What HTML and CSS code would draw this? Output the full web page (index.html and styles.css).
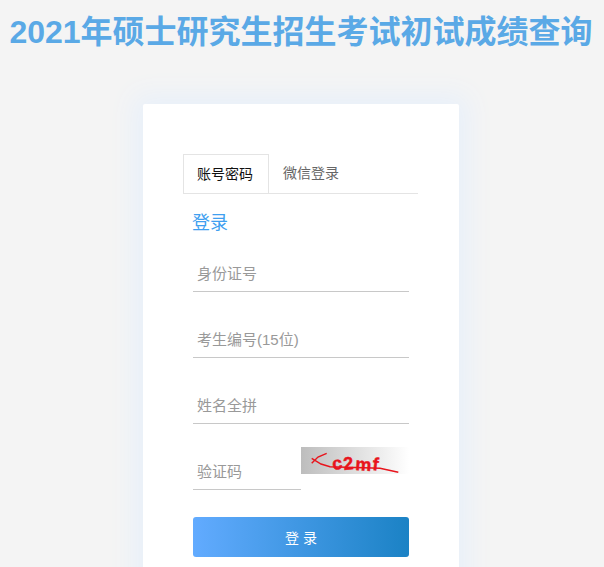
FILE: index.html
```html
<!DOCTYPE html>
<html lang="zh-CN">
<head>
<meta charset="utf-8">
<title>2021年硕士研究生招生考试初试成绩查询</title>
<link rel="stylesheet" href="styles.css">
</head>
<body>
<h1 class="page-title">2021年硕士研究生招生考试初试成绩查询</h1>
<main class="card">
  <div class="tabs">
    <div class="tab tab-active">账号密码</div>
    <div class="tab">微信登录</div>
  </div>
  <form class="form">
    <h2 class="form-title">登录</h2>
    <div class="field"><input class="input" type="text" placeholder="身份证号"></div>
    <div class="field"><input class="input" type="text" placeholder="考生编号(15位)"></div>
    <div class="field"><input class="input" type="text" placeholder="姓名全拼"></div>
    <div class="field field-captcha">
      <input class="input input-short" type="text" placeholder="验证码">
      <svg class="captcha" width="108" height="27" viewBox="0 0 108 27" role="img" aria-label="验证码图片">
        <defs>
          <linearGradient id="captcha-bg" x1="0" x2="1" y1="0" y2="0">
            <stop offset="0" stop-color="#bdbdbd"/>
            <stop offset="1" stop-color="#ffffff"/>
          </linearGradient>
        </defs>
        <rect width="108" height="27" fill="url(#captcha-bg)"/>
        <text class="captcha-text" x="32" y="23" rotate="-8 -6 4 6">c2mf</text>
        <path class="captcha-line" d="M10.7 16.3 L17 10 L25.7 6.3 M10.7 11.3 L20 17 L29 19.7 L79 21.3 L97.3 25.3"/>
      </svg>
    </div>
    <button class="submit" type="button">登 录</button>
  </form>
</main>
</body>
</html>
```
FILE: styles.css
```css
* {
  box-sizing: border-box;
}

html,
body {
  height: 100%;
  overflow: hidden;
}

body {
  margin: 0;
  padding-right: 2px;
  background: #f4f4f4;
  font-family: "Liberation Sans", "Noto Sans CJK SC", sans-serif;
}

.page-title {
  margin: 0;
  padding-top: 14px;
  font-size: 32px;
  line-height: 36px;
  font-weight: 700;
  text-align: center;
  white-space: nowrap;
  color: #5aa9e6;
}

.card {
  width: 316px;
  margin: 54px auto 0;
  padding: 50px 40px 40px;
  background: #fff;
  border-radius: 2px;
  box-shadow: 0 0 26px 9px #e8f0fa;
}

.tabs {
  display: flex;
  width: 235px;
  height: 40px;
  border-bottom: 1px solid #e4e4e4;
}

.tab {
  width: 86px;
  height: 40px;
  padding: 9px 2px 0 0;
  font-size: 14px;
  line-height: 21px;
  text-align: center;
  color: #666;
}

.tab-active {
  color: #111;
  background: #fff;
  border: 1px solid #e4e4e4;
}

.form {
  padding: 0 10px;
}

.form-title {
  margin: 16px 0 0 -1px;
  font-size: 18px;
  line-height: 27px;
  font-weight: 400;
  color: #3f9ff0;
}

.field {
  margin-top: 26px;
}

.form-title + .field {
  margin-top: 15px;
}

.input {
  display: block;
  width: 100%;
  height: 40px;
  padding: 3px 4px 0;
  border: 0;
  border-bottom: 1px solid #c8c8c8;
  outline: 0;
  background: transparent;
  font: 15px "Liberation Sans", "Noto Sans CJK SC", sans-serif;
  color: #333;
}

.input::placeholder {
  color: #999;
  opacity: 1;
}

.field-captcha {
  display: flex;
  justify-content: space-between;
  align-items: flex-start;
}

.input-short {
  width: 108px;
}

.captcha {
  display: block;
  flex: none;
  margin-top: -3px;
}

.captcha-text {
  font-family: "Liberation Sans", sans-serif;
  font-size: 18px;
  font-weight: 700;
  letter-spacing: 1px;
  fill: #e8141c;
  stroke: #e8141c;
  stroke-width: 0.4;
}

.captcha-line {
  fill: none;
  stroke: #e8141c;
  stroke-width: 1.4;
}

.submit {
  display: block;
  width: 100%;
  height: 40px;
  margin-top: 27px;
  border: 0;
  border-radius: 3px;
  background: linear-gradient(90deg, #62abff, #1b82c5);
  font: 14px "Liberation Sans", "Noto Sans CJK SC", sans-serif;
  color: #fff;
}
```
